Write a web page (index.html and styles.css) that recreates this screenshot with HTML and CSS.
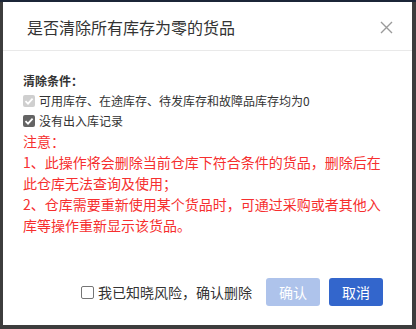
FILE: index.html
```html
<!DOCTYPE html>
<html lang="zh">
<head>
<meta charset="utf-8">
<link rel="stylesheet" href="styles.css">
</head>
<body>
<div class="topbar"></div>
<div class="modal">
  <div class="modal-header">
    <div class="title">是否清除所有库存为零的货品</div>
    <svg class="close" width="13" height="13" viewBox="0 0 13 13"><path d="M1 1L12 12M12 1L1 12" stroke="#9a9a9a" stroke-width="1.4" fill="none"/></svg>
  </div>
  <div class="modal-body">
    <div class="cond-title">清除条件：</div>
    <div class="check-row"><span class="cb cb-disabled"><svg viewBox="0 0 12 12"><path d="M2.5 6.2L5 8.6L9.6 3.6" stroke="#fff" stroke-width="1.8" fill="none"/></svg></span>可用库存、在途库存、待发库存和故障品库存均为0</div>
    <div class="check-row"><span class="cb cb-checked"><svg viewBox="0 0 12 12"><path d="M2.5 6.2L5 8.6L9.6 3.6" stroke="#fff" stroke-width="1.8" fill="none"/></svg></span>没有出入库记录</div>
    <div class="notice">
      <div>注意：</div>
      <div>1、此操作将会删除当前仓库下符合条件的货品，删除后在此仓库无法查询及使用；</div>
      <div>2、仓库需要重新使用某个货品时，可通过采购或者其他入库等操作重新显示该货品。</div>
    </div>
  </div>
  <div class="modal-footer">
    <label class="agree"><span class="cb cb-empty"></span>我已知晓风险，确认删除</label>
    <button class="btn btn-disabled">确认</button>
    <button class="btn btn-primary">取消</button>
  </div>
</div>
</body>
</html>
```
FILE: styles.css
```css
html, body {
  margin: 0;
  padding: 0;
}
body {
  background: #3d3d3d;
  width: 416px;
  height: 329px;
  overflow: hidden;
  font-family: "Noto Sans CJK SC", "Noto Sans", sans-serif;
  color: #333;
}
.topbar {
  height: 2px;
  background: #1b2537;
}
.modal {
  margin-left: 3px;
  width: 409px;
  height: 323px;
  background: #fff;
  display: flex;
  flex-direction: column;
}
.modal-header {
  height: 48px;
  border-bottom: 1px solid #e9e9e9;
  display: flex;
  align-items: center;
  padding: 0 19px 0 24px;
  box-sizing: content-box;
}
.title {
  flex: 1;
  font-size: 16px;
  color: #333;
  line-height: 20px;
  margin-top: 2px;
}
.close {
  width: 13px;
  height: 13px;
  margin-top: 2px;
}
.modal-body {
  flex: 1;
  padding: 20px 20px 0 20px;
  font-size: 12px;
}
.cond-title {
  font-weight: bold;
  line-height: 20px;
  color: #333;
}
.check-row {
  display: flex;
  align-items: center;
  height: 20px;
  line-height: 20px;
  color: #333;
}
.cb {
  width: 12px;
  height: 12px;
  border-radius: 2px;
  margin-right: 4px;
  box-sizing: border-box;
  display: inline-flex;
  flex-shrink: 0;
}
.cb svg {
  width: 12px;
  height: 12px;
}
.cb-disabled {
  background: #cfcfcf;
}
.cb-checked {
  background: #646464;
}
.cb-empty {
  width: 13px;
  height: 13px;
  border: 1px solid #757575;
  background: #fff;
}
.notice {
  color: #f62f2f;
  font-size: 14px;
  line-height: 21px;
}
.modal-footer {
  display: flex;
  align-items: center;
  justify-content: flex-end;
  padding: 0 29px 19px 0;
}
.agree {
  display: flex;
  align-items: center;
  font-size: 14px;
  color: #333;
  margin-right: 14px;
}
.agree .cb {
  margin-right: 4px;
}
.btn {
  width: 54px;
  height: 28px;
  border: none;
  border-radius: 3px;
  color: #fff;
  font-family: "Noto Sans CJK SC", "Noto Sans", sans-serif;
  font-size: 14px;
  padding: 0;
}
.btn-disabled {
  background: #aec3eb;
  margin-right: 9px;
}
.btn-primary {
  background: #3366cc;
}
```
